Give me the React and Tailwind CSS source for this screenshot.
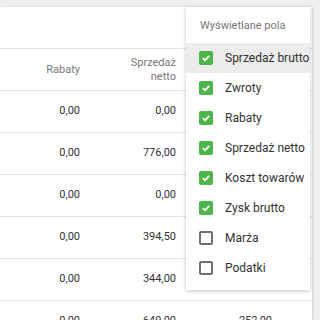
import React from "react";

const rows = [
  ["0,00", "0,00", ""],
  ["0,00", "776,00", ""],
  ["0,00", "0,00", ""],
  ["0,00", "394,50", ""],
  ["0,00", "344,00", ""],
  ["0,00", "649,00", "252,00"],
];

const items = [
  ["Sprzedaż brutto", true],
  ["Zwroty", true],
  ["Rabaty", true],
  ["Sprzedaż netto", true],
  ["Koszt towarów", true],
  ["Zysk brutto", true],
  ["Marża", false],
  ["Podatki", false],
];

function Check({ on }) {
  if (on)
    return (
      <div className="w-[14px] h-[14px] rounded-[2px] bg-[#4cb648] flex items-center justify-center">
        <svg width="10" height="10" viewBox="0 0 10 10">
          <path d="M1.8 5.2 L4 7.3 L8.3 2.8" fill="none" stroke="white" strokeWidth="1.8" />
        </svg>
      </div>
    );
  return <div className="w-[14px] h-[14px] rounded-[2px] border-2 border-[#6f6f6f] bg-white" />;
}

export default function App() {
  return (
    <div className="relative w-[320px] h-[320px] overflow-hidden bg-[#efefef] font-['Roboto',sans-serif]">
      <div className="mt-[7px] w-[312px] h-[313px] bg-white shadow-[1px_0_2px_rgba(0,0,0,0.12)]">
        <div className="h-[42px] border-b border-[#e4e4e4]" />
        <div className="flex h-[42px] border-b border-[#e4e4e4] items-center text-[11px] text-[#777] leading-[14px]">
          <div className="w-[96px] pr-[16px] text-right">Rabaty</div>
          <div className="w-[96px] pr-[16px] text-right">
            Sprzedaż
            <br />
            netto
          </div>
        </div>
        {rows.map((r, i) => (
          <div
            key={i}
            className="flex h-[42px] border-b border-[#e4e4e4] items-center text-[11px] text-[#333]"
          >
            <div className="w-[96px] pr-[16px] text-right">{r[0]}</div>
            <div className="w-[96px] pr-[16px] text-right">{r[1]}</div>
            <div className="w-[96px] pr-[16px] text-right">{r[2]}</div>
          </div>
        ))}
      </div>
      <div className="absolute left-[186px] top-[7px] w-[124px] h-[283px] bg-white shadow-[0_1px_4px_rgba(0,0,0,0.25)]">
        <div className="h-[36px] pl-[14px] pt-[11px] text-[11px] text-[#777]">Wyświetlane pola</div>
        {items.map(([label, on], i) => (
          <div
            key={label}
            className={
              "h-[30px] flex items-center pl-[13px] gap-[12px] text-[12px] text-[#333] " +
              (i === 0 ? "bg-[#ececec]" : "")
            }
          >
            <Check on={on} />
            <span>{label}</span>
          </div>
        ))}
      </div>
    </div>
  );
}
